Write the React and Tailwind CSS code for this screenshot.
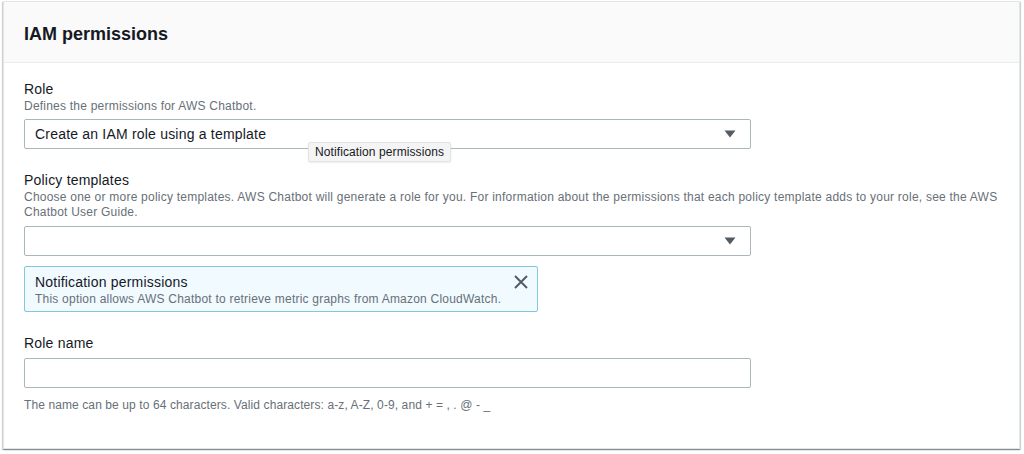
import React from "react";

const Caret = () => (
  <svg width="12" height="8" viewBox="0 0 12 8" className="block">
    <path d="M0.5 0.5 H11.5 L6 7.5 Z" fill="#545b64" />
  </svg>
);

function Select({ value, children }) {
  return (
    <div className="relative w-[727px] h-[30px] border border-[#aab7b8] rounded-[2px] bg-white flex items-center pl-[10px] pr-[14px]">
      <span className="flex-1 text-[14px] text-[#16191f] leading-[20px] tracking-[0.2px]">{value}</span>
      <Caret />
      {children}
    </div>
  );
}

export default function App() {
  return (
    <div
      className="w-[1024px] h-[454px] bg-white pt-[1px] pl-[3px]"
      style={{ fontFamily: '"Liberation Sans", Arial, sans-serif' }}
    >
      <div className="w-[1017px] h-[448px] border border-[#e3e6e6] bg-white shadow-[0_1px_1px_0_rgba(0,28,36,0.3),1px_1px_1px_0_rgba(0,28,36,0.15),-1px_1px_1px_0_rgba(0,28,36,0.15)]">
        <div className="h-[61px] bg-[#fafafa] border-b border-[#eaeded] px-5 flex items-center">
          <h2 className="text-[18px] font-bold text-[#16191f] leading-[22px] pt-[3px]">IAM permissions</h2>
        </div>
        <div className="px-5 pt-[17px] flex flex-col">
          <div className="text-[14px] leading-[18px] text-[#16191f] tracking-[0.2px]">Role</div>
          <div className="text-[12px] leading-[16px] text-[#687078] tracking-[0.22px]">Defines the permissions for AWS Chatbot.</div>
          <div className="mt-[5px]">
            <Select value="Create an IAM role using a template">
              <div className="absolute left-[283px] top-[22px] h-[20px] px-[6px] flex items-center bg-[#f4f4f4] border border-[#e1e4e4] rounded-[2px] shadow-[0_1px_2px_rgba(0,0,0,0.08)] text-[12px] text-[#16191f] whitespace-nowrap tracking-[0.1px]">
                Notification permissions
              </div>
            </Select>
          </div>

          <div className="mt-[22px] text-[14px] leading-[18px] text-[#16191f] tracking-[0.2px]">Policy templates</div>
          <div className="mt-[1px] text-[12px] leading-[15px] text-[#687078] w-[976px] tracking-[0.23px]">
            Choose one or more policy templates. AWS Chatbot will generate a role for you. For information about the permissions that each policy template adds to your role, see the AWS
            <br />
            Chatbot User Guide.
          </div>
          <div className="mt-[6px]">
            <Select value="" />
          </div>

          <div className="mt-[10px] w-[514px] h-[46px] border border-[#84c6de] bg-[#f1faff] rounded-[2px] flex items-start pl-[10px] pr-[8px] pt-[6px]">
            <div className="flex-1">
              <div className="text-[14px] leading-[18px] text-[#16191f] tracking-[0.2px]">Notification permissions</div>
              <div className="text-[12px] leading-[16px] text-[#687078] tracking-[0.22px]">This option allows AWS Chatbot to retrieve metric graphs from Amazon CloudWatch.</div>
            </div>
            <svg width="16" height="16" viewBox="0 0 16 16" className="mt-[1px]">
              <path d="M2 2 L14 14 M14 2 L2 14" stroke="#545b64" strokeWidth="2" fill="none" />
            </svg>
          </div>

          <div className="mt-[22px] text-[14px] leading-[18px] text-[#16191f] tracking-[0.2px]">Role name</div>
          <div className="mt-[6px] w-[727px] h-[30px] border border-[#aab7b8] rounded-[2px] bg-white" />
          <div className="mt-[9px] text-[12px] leading-[16px] text-[#687078] tracking-[0.1px]">
            The name can be up to 64 characters. Valid characters: a-z, A-Z, 0-9, and + = , . @ - _
          </div>
        </div>
      </div>
    </div>
  );
}
